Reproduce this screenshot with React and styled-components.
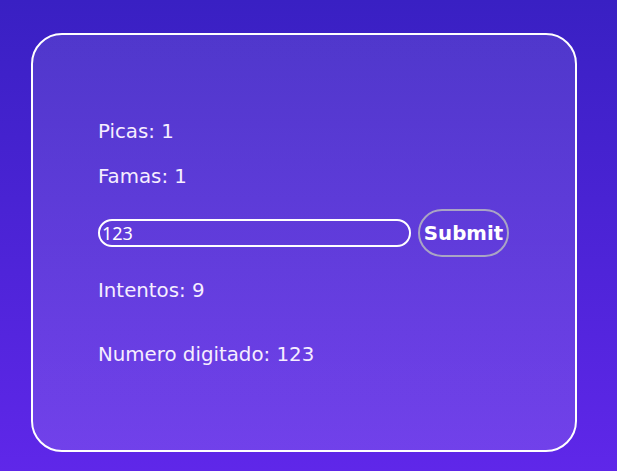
import React from "react";
import styled, { createGlobalStyle } from "styled-components";

const GlobalStyle = createGlobalStyle`
  html, body {
    margin: 0;
    height: 100%;
  }
  body {
    background: linear-gradient(180deg, #3920c3 0%, #5f27e9 100%);
    font-family: "DejaVu Sans", Verdana, sans-serif;
    color: #f6eeff;
  }
  #root {
    min-height: 100%;
  }
`;

const Page = styled.div`
  padding: 33px 0 0 31px;
`;

const Card = styled.div`
  box-sizing: border-box;
  width: 546px;
  height: 419px;
  border: 2px solid #fff;
  border-radius: 31px;
  background: linear-gradient(180deg, rgba(255, 255, 255, 0.1) 0%, rgba(255, 255, 255, 0.12) 100%);
  padding: 87px 64px 0 65px;
  display: flex;
  flex-direction: column;
`;

const Line = styled.p`
  margin: 0;
  font-size: 19.8px;
  line-height: 20px;
  margin-top: ${(p) => p.$gap || 0}px;
`;

const Form = styled.form`
  display: flex;
  align-items: center;
  gap: 7px;
  margin-top: 22px;
`;

const Input = styled.input`
  box-sizing: border-box;
  width: 313px;
  height: 28px;
  margin-top: -1px;
  border: 2px solid #fff;
  border-radius: 14px;
  background: transparent;
  color: #fff;
  font-family: "Noto Sans", sans-serif;
  font-size: 18px;
  padding: 0 2px;
  outline: none;
`;

const Button = styled.button`
  box-sizing: border-box;
  width: 91px;
  height: 48px;
  border: 2px solid #a9a4c4;
  border-radius: 24px;
  background: transparent;
  color: #fff;
  font-family: "DejaVu Sans", Verdana, sans-serif;
  font-weight: bold;
  font-size: 19.8px;
  padding: 0;
  cursor: pointer;
`;

export default function App() {
  return (
    <>
      <GlobalStyle />
      <Page>
        <Card>
          <Line>Picas: 1</Line>
          <Line $gap={25}>Famas: 1</Line>
          <Form onSubmit={(e) => e.preventDefault()}>
            <Input defaultValue="123" />
            <Button type="submit">Submit</Button>
          </Form>
          <Line $gap={24}>Intentos: 9</Line>
          <Line $gap={44}>Numero digitado: 123</Line>
        </Card>
      </Page>
    </>
  );
}
